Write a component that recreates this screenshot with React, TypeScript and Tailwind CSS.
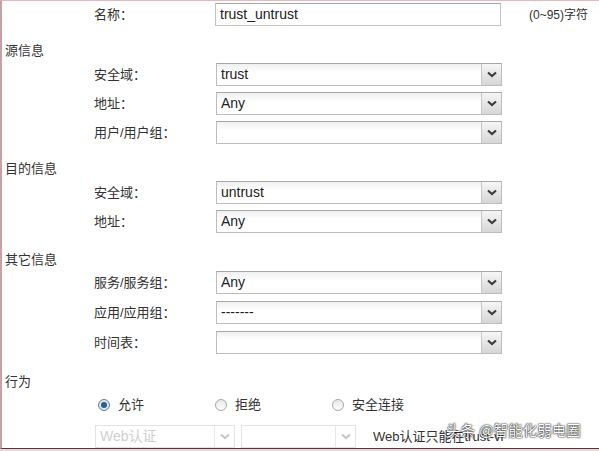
import React from 'react';

const font = { fontFamily: '"Liberation Sans", "Noto Sans CJK SC", sans-serif' };

function Chevron({ light }: { light?: boolean }) {
  return (
    <svg width="10" height="7" viewBox="0 0 10 7">
      <path
        d="M1 1.5 L5 5 L9 1.5"
        fill="none"
        stroke={light ? '#c8c8c8' : '#3c3c3c'}
        strokeWidth="2.2"
      />
    </svg>
  );
}

function Select({ value, disabled, width = 'w-[286px]' }: { value?: string; disabled?: boolean; width?: string }) {
  return (
    <div
      className={`${width} h-[23px] flex border ${
        disabled ? 'border-[#e4e4e4] bg-white' : 'border-[#bdbdbd] border-t-[#a8a8a8] bg-gradient-to-b from-[#f0f0f0] to-white to-40%'
      }`}
    >
      <div className={`flex-1 pl-[4px] leading-[21px] text-[14px] ${disabled ? 'text-[#cfcfcf]' : 'text-[#222]'}`}>
        {value}
      </div>
      <div
        className={`w-[20px] flex items-center justify-center border-l ${
          disabled ? 'border-[#e8e8e8] bg-white' : 'border-[#c6c6c6] bg-gradient-to-b from-[#f6f6f6] to-[#d6d6d6]'
        }`}
      >
        <Chevron light={disabled} />
      </div>
    </div>
  );
}

function Row({ label, children }: { label: string; children: React.ReactNode }) {
  return (
    <div className="flex items-center h-[23px] pl-[92px]">
      <div className="w-[122px] text-[13px] text-[#333]">{label}</div>
      {children}
    </div>
  );
}

function Header({ title }: { title: string }) {
  return (
    <div className="h-[37px] pt-[16px] pl-[3px] text-[13px] leading-[18px] text-[#333]">{title}</div>
  );
}

function Radio({ checked, label }: { checked?: boolean; label: string }) {
  return (
    <div className="flex items-center gap-[8px]">
      <span
        className={`w-[12px] h-[12px] rounded-full border flex items-center justify-center ${
          checked ? 'border-[#6f7f8f] bg-[#dde6ee]' : 'border-[#a8a8a8] bg-gradient-to-b from-[#e8e8e8] to-white'
        }`}
      >
        {checked && <span className="w-[6px] h-[6px] rounded-full bg-[#2a5f8f]" />}
      </span>
      <span className="text-[13px] text-[#333]">{label}</span>
    </div>
  );
}

export default function App() {
  return (
    <div className="w-[599px] h-[451px] bg-[#ecd6da]" style={font}>
      <div className="relative h-[449px] overflow-hidden bg-white border-t border-t-[#e6b8bc] border-l-2 border-l-[#c9a0a4] border-b border-b-[#4e3a42]">
        <div className="pt-[2px]">
          <div className="flex items-center h-[23px] pl-[92px]">
            <div className="w-[121px] text-[13px] text-[#333]">名称：</div>
            <div className="w-[286px] h-[23px] border border-[#c4c4c4] border-t-[#a8a8a8] pl-[4px] leading-[21px] text-[14px] text-[#222]">
              trust_untrust
            </div>
            <div className="ml-[28px] text-[12px] text-[#333]">(0~95)字符</div>
          </div>

          <Header title="源信息" />
          <div className="flex flex-col gap-[6px]">
            <Row label="安全域："><Select value="trust" /></Row>
            <Row label="地址："><Select value="Any" /></Row>
            <Row label="用户/用户组："><Select /></Row>
          </div>

          <Header title="目的信息" />
          <div className="flex flex-col gap-[6px]">
            <Row label="安全域："><Select value="untrust" /></Row>
            <Row label="地址："><Select value="Any" /></Row>
          </div>

          <div className="h-[38px] pt-[18px] pl-[3px] text-[13px] leading-[18px] text-[#333]">其它信息</div>
          <div className="flex flex-col gap-[7px]">
            <Row label="服务/服务组："><Select value="Any" /></Row>
            <Row label="应用/应用组："><Select value="-------" /></Row>
            <Row label="时间表："><Select /></Row>
          </div>

          <div className="h-[39px] pt-[19px] pl-[3px] text-[13px] leading-[18px] text-[#333]">行为</div>
          <div className="flex items-center h-[24px] pl-[96px]">
            <div className="w-[117px]"><Radio checked label="允许" /></div>
            <div className="w-[117px]"><Radio label="拒绝" /></div>
            <Radio label="安全连接" />
          </div>

          <div className="flex items-center mt-[8px] pl-[93px] gap-[6px]">
            <Select value="Web认证" disabled width="w-[140px]" />
            <Select disabled width="w-[115px]" />
            <div className="ml-[11px] text-[13px] text-[#333]">Web认证只能在trust-vr</div>
          </div>
        </div>

        <div className="absolute left-[444px] top-[420px] text-[14.5px] text-white [text-shadow:0_0_2px_#000,0_0_1px_#000]">
          头条 @智能化弱电圈
        </div>
      </div>
    </div>
  );
}
